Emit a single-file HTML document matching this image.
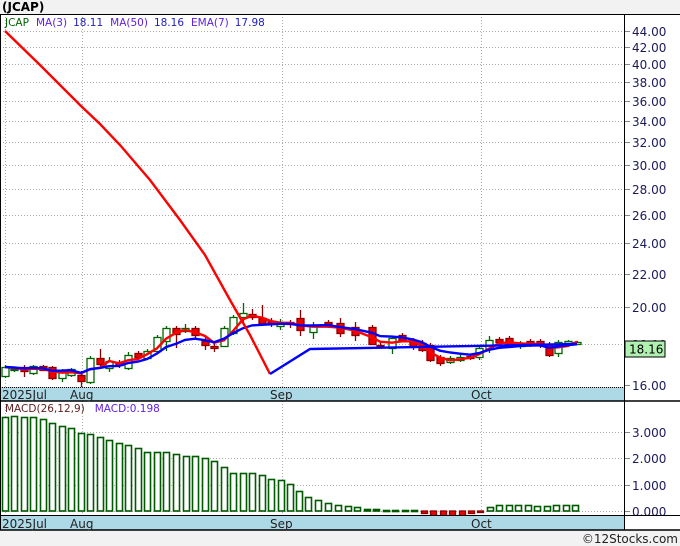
<!DOCTYPE html>
<html><head><meta charset="utf-8"><style>
html,body{margin:0;padding:0;background:#f2f2f2;}
svg{display:block;font-family:"DejaVu Sans","Liberation Sans",sans-serif;}
</style></head><body>
<svg id="s" width="680" height="546" viewBox="0 0 680 546" xmlns="http://www.w3.org/2000/svg">
<rect x="0" y="0" width="680" height="546" fill="#f2f2f2"/>
<text x="2" y="11" font-size="12" font-weight="bold" fill="#000">(JCAP)</text>
<rect x="0" y="14" width="680" height="516" fill="#fff"/>
<g id="g"></g>
</svg>
<script>
var g=document.getElementById('g'),h='';
function Y(p){return 31+(Math.log(44)-Math.log(p))*350;}
var vx=[5,82,282,481];
var pl=[44,42,40,38,36,34,32,30,28,26,24,22,20,18,16];
pl.forEach(function(p){var y=Math.round(Y(p))+0.5;if(p>16)h+='<line x1="0" x2="624" y1="'+y+'" y2="'+y+'" stroke="#aaa" stroke-dasharray="1,2"/>';
h+='<line x1="624" x2="630" y1="'+y+'" y2="'+y+'" stroke="#888"/>';
h+='<text x="632" y="'+(y+4.5)+'" font-size="12" fill="#1a1a5a">'+p.toFixed(2)+'</text>';});
[3,2,1,0].forEach(function(v){var y=Math.round(511-v*26.3)+0.5;h+='<line x1="0" x2="624" y1="'+y+'" y2="'+y+'" stroke="#aaa" stroke-dasharray="1,2"/>';
h+='<line x1="624" x2="630" y1="'+y+'" y2="'+y+'" stroke="#888"/>';
h+='<text x="632" y="'+(y+4.5)+'" font-size="12" fill="#1a1a5a">'+v.toFixed(3)+'</text>';});
vx.forEach(function(x){h+='<line x1="'+(x+0.5)+'" x2="'+(x+0.5)+'" y1="14" y2="530" stroke="#aaa" stroke-dasharray="1,2"/>';});
var C=[[5,376,367,365,378],[14,370,369,368,372],[24,367,371,365,377],[33,373,366,365,375],[43,366,370,365,371],[52,367,378,366,380],[62,378,370,369,382],[71,375,369,368,377],[81,375,381,371,388],[90,382,358,356,384],[100,358,364,349,366],[109,368,361,357,372],[119,362,365,360,368],[128,368,355,352,370],[138,353,357,351,360],[147,358,351,349,360],[157,351,337,335,353],[166,341,328,326,351],[176,328,334,326,348],[185,331,328,324,333],[195,328,335,326,340],[205,341,345,337,350],[214,346,348,343,352],[224,346,328,326,346],[233,333,317,315,335],[243,317,313,303,322],[252,314,317,309,320],[262,318,323,305,325],[271,321,323,318,327],[280,326,322,319,330],[290,322,324,320,328],[300,318,330,310,336],[313,332,326,322,339],[328,322,324,320,328],[340,323,333,318,337],[355,327,335,322,341],[372,327,344,325,345],[380,345,346,343,348],[392,348,338,336,354],[402,335,340,333,342],[413,340,346,338,350],[422,343,350,340,352],[430,345,360,343,362],[440,357,363,355,366],[450,362,358,356,364],[460,360,357,355,362],[470,356,358,354,360],[479,357,348,346,360],[489,349,340,336,353],[499,339,342,337,345],[509,338,345,336,348],[520,346,343,341,349],[530,341,344,339,347],[540,341,345,339,348],[549,344,355,342,357],[558,353,342,340,357],[568,343,341,340,345],[577,344,342,341,345]];
C.forEach(function(c){var up=c[2]<c[1],col=up?'#006400':'#8b0000';
h+='<line x1="'+(c[0]+0.5)+'" x2="'+(c[0]+0.5)+'" y1="'+c[3]+'" y2="'+c[4]+'" stroke="'+col+'" stroke-width="1.3"/>';
var t=Math.min(c[1],c[2]),b=Math.max(c[1],c[2]);if(b-t<1)b=t+1;
h+='<rect x="'+(c[0]-3)+'" y="'+(t+0.5)+'" width="7" height="'+(b-t)+'" fill="'+(up?'#fff':'#e00')+'" stroke="'+(up?'#006400':'#8b0000')+'" stroke-width="1.3"/>';});
var m=C.map(function(c){return [c[0],c[2]]});
var r=[],e=[],ev=m[0][1];
m.forEach(function(p,i){var a=m.slice(Math.max(0,i-2),i+1);r.push(p[0]+','+(a.reduce(function(s,q){return s+q[1]},0)/a.length).toFixed(1));ev=ev+(p[1]-ev)*0.25;e.push(p[0]+','+ev.toFixed(1));});
h+='<polyline points="'+r.join(' ')+'" fill="none" stroke="#f00" stroke-width="2.4"/>';
h+='<polyline points="'+e.join(' ')+'" fill="none" stroke="#00f" stroke-width="2.4"/>';
h+='<polyline points="5,31 40,65 80,105 100,124 120,145 150,180 180,220 205,255 230,300 250,335 270,374" fill="none" stroke="#f00" stroke-width="2.4"/>';
h+='<polyline points="270,374 310,349 577,344" fill="none" stroke="#00f" stroke-width="2.4"/>';
var M=[[5,417],[14,416],[24,417],[33,417],[43,419],[52,423],[62,426],[71,428],[81,433],[90,434],[100,437],[109,440],[119,443],[128,445],[138,448],[147,452],[157,452],[166,452],[176,454],[186,456],[195,456],[205,458],[214,461],[224,467],[233,473],[243,473],[252,473],[262,475],[271,479],[281,480],[290,484],[299,491],[308,497],[318,500],[328,503],[338,505],[348,506],[357,507],[367,509],[376,509],[386,510],[395,510],[405,510],[414,510],[424,513],[433,515],[443,515],[452,515],[462,515],[471,513],[480,511.5],[490,507],[499,505],[509,505],[518,505],[528,505],[537,506],[547,506],[556,505],[566,505],[575,505]];
M.forEach(function(b){var x=b[0]-2.5,y=Math.round(b[1])+0.5;
if(y<=511){h+='<rect x="'+x+'" y="'+y+'" width="6" height="'+Math.max(1,511-y)+'" fill="#fff" stroke="#005a00" stroke-width="1.6"/>';}
else{h+='<rect x="'+x+'" y="511" width="6" height="'+(y-511)+'" fill="#e00" stroke="#8b0000" stroke-width="1.3"/>';}});
h+='<rect x="0" y="387" width="624" height="14" fill="#add8e6"/><line x1="0" x2="624" y1="387.5" y2="387.5" stroke="#000" stroke-dasharray="1,1"/>';
h+='<rect x="0" y="516" width="624" height="14" fill="#add8e6"/>';
h+='<line x1="0" x2="680" y1="401" y2="401" stroke="#000" stroke-width="1.5"/>';
h+='<line x1="0" x2="680" y1="515.5" y2="515.5" stroke="#000"/>';
h+='<line x1="0" x2="680" y1="530" y2="530" stroke="#000" stroke-width="1.5"/>';
[[2,'2025Jul'],[70,'Aug'],[270,'Sep'],[471,'Oct']].forEach(function(t){h+='<text x="'+t[0]+'" y="399" font-size="12" fill="#222">'+t[1]+'</text><text x="'+t[0]+'" y="528" font-size="12" fill="#222">'+t[1]+'</text>';});
h+='<line x1="0" x2="680" y1="14.5" y2="14.5" stroke="#000"/>';
h+='<line x1="624.5" x2="624.5" y1="14" y2="530" stroke="#000"/>';
h+='<line x1="0.5" x2="0.5" y1="14" y2="530" stroke="#000"/>';
h+='<rect x="625" y="341" width="40" height="16" fill="#b0f0b0" stroke="#000"/><text x="629" y="353.5" font-size="12" fill="#000">18.16</text>';
h+='<text x="5" y="26" font-size="10.5"><tspan fill="#006400">JCAP</tspan><tspan fill="#6020e0" dx="7">MA(3)</tspan><tspan fill="#2020c0" dx="6">18.11</tspan><tspan fill="#6020e0" dx="7">MA(50)</tspan><tspan fill="#2020c0" dx="6">18.16</tspan><tspan fill="#6020e0" dx="7">EMA(7)</tspan><tspan fill="#2020c0" dx="6">17.98</tspan></text>';
h+='<text x="5" y="412" font-size="10.5"><tspan fill="#602020">MACD(26,12,9)</tspan><tspan fill="#6020e0" dx="10">MACD:0.198</tspan></text>';
h+='<text x="678" y="543" font-size="12" fill="#222" text-anchor="end">©12Stocks.com</text>';
g.innerHTML=h;
</script>
</body></html>
